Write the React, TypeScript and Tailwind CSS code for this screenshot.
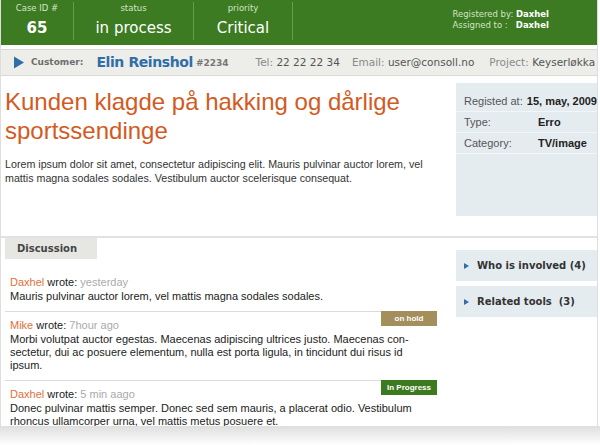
const headerFont = { fontFamily: '"DejaVu Sans", Verdana, sans-serif' };
const bodyFont = { fontFamily: '"Liberation Sans", Arial, sans-serif' };

function Triangle({ className }: { className: string }) {
  return (
    <svg viewBox="0 0 10 12" className={`shrink-0 ${className}`}>
      <path d="M0 0 L10 6 L0 12 Z" fill="currentColor" />
    </svg>
  );
}

const comments = [
  {
    name: 'Daxhel',
    when: 'yesterday',
    lines: ['Mauris pulvinar auctor lorem, vel mattis magna sodales sodales.'],
  },
  {
    name: 'Mike',
    when: '7hour ago',
    badge: { text: 'on hold', cls: 'bg-[#a38e5c]' },
    lines: [
      'Morbi volutpat auctor egestas. Maecenas adipiscing ultrices justo. Maecenas con-',
      'sectetur, dui ac posuere elementum, nulla est porta ligula, in tincidunt dui risus id',
      'ipsum.',
    ],
  },
  {
    name: 'Daxhel',
    when: '5 min aago',
    badge: { text: 'In Progress', cls: 'bg-[#3c7a20]' },
    lines: [
      'Donec pulvinar mattis semper. Donec sed sem mauris, a placerat odio. Vestibulum',
      'rhoncus ullamcorper urna, vel mattis metus posuere et.',
    ],
  },
];

export default function App() {
  return (
    <div className="w-[600px] h-[445px] bg-white overflow-hidden" style={bodyFont}>
      <div className="w-[598px] h-[426px] border-x border-[#dedede] overflow-hidden flex flex-col">
        {/* header */}
        <div className="h-[45px] bg-[#3d7b22] flex text-white shrink-0" style={headerFont}>
          <div className="w-[72px] flex flex-col items-center pt-[3px]">
            <span className="text-[8.5px] text-[#d3e3c8] leading-[11px]">Case ID #</span>
            <span className="mt-[2px] text-[15px] font-bold leading-[24px]">65</span>
          </div>
          <div className="w-px h-[38px] bg-[#6a9c50] mt-[2px]" />
          <div className="w-[119px] flex flex-col items-center pt-[3px]">
            <span className="text-[8.5px] text-[#d3e3c8] leading-[11px]">status</span>
            <span className="mt-[2px] text-[15px] leading-[24px]">in process</span>
          </div>
          <div className="w-px h-[38px] bg-[#6a9c50] mt-[2px]" />
          <div className="w-[98px] flex flex-col items-center pt-[3px]">
            <span className="text-[8.5px] text-[#d3e3c8] leading-[11px]">priority</span>
            <span className="mt-[2px] text-[15px] leading-[24px]">Critical</span>
          </div>
          <div className="w-px h-[38px] bg-[#6a9c50] mt-[2px]" />
          <div className="flex-1 flex justify-end pr-[48px] pt-[9px]">
            <div className="text-[8.5px] leading-[11px] text-[#d3e3c8]">
              <div>
                Registered by: <span className="font-bold text-white">Daxhel</span>
              </div>
              <div>
                Assigned to : &nbsp; <span className="font-bold text-white">Daxhel</span>
              </div>
            </div>
          </div>
        </div>

        {/* customer bar */}
        <div
          className="mt-[4px] h-[27px] bg-[#ededea] border-y border-[#d9d9d5] flex items-center whitespace-nowrap shrink-0 overflow-hidden"
          style={headerFont}
        >
          <Triangle className="w-[10px] h-[13px] ml-[13px] text-[#2f6ea6]" />
          <span className="shrink-0 ml-[7px] text-[9px] font-bold text-[#6d6d6d]">Customer:</span>
          <span className="shrink-0 ml-[13px] text-[14px] font-bold text-[#2f6ea6] tracking-[-0.4px]">Elin Reinshol</span>
          <span className="shrink-0 ml-[3px] text-[9px] font-bold text-[#777] mt-[3px]">#2234</span>
          <span className="shrink-0 ml-[27px] text-[10.5px] text-[#8a8a8a]">
            Tel: <span className="text-[#555]">22 22 22 34</span>
          </span>
          <span className="shrink-0 ml-[12px] text-[10.5px] text-[#8a8a8a]">
            Email: <span className="text-[#555]">user@consoll.no</span>
          </span>
          <span className="shrink-0 ml-[15px] text-[10.5px] text-[#8a8a8a]">
            Project: <span className="text-[#555]">Keyserløkka nord</span>
          </span>
        </div>

        {/* case summary */}
        <div className="flex h-[160px] shrink-0">
          <div className="flex-1 pl-[4px] pt-[11px]">
            <h1 className="text-[24px] leading-[29px] text-[#d35a22] whitespace-nowrap">
              Kunden klagde på hakking og dårlige
              <br />
              sportssendinge
            </h1>
            <p className="mt-[12px] text-[10.7px] leading-[14px] text-[#333] whitespace-nowrap">
              Lorem ipsum dolor sit amet, consectetur adipiscing elit. Mauris pulvinar auctor lorem, vel
              <br />
              mattis magna sodales sodales. Vestibulum auctor scelerisque consequat.
            </p>
          </div>
          <div className="w-[141px] mt-[7px] h-[133px] bg-[#e5ecf0] pt-[8px] overflow-hidden whitespace-nowrap text-[11px]">
            {[
              ['Registed at:', '15, may, 2009'],
              ['Type:', 'Erro'],
              ['Category:', 'TV/image'],
            ].map(([k, v]) => (
              <div key={k} className="flex h-[21px] items-center border-b border-[#f2f6f8] pl-[8px]">
                <span className="w-[74px] text-[#555]">{k}</span>
                <span className="font-bold text-[#222]">{v}</span>
              </div>
            ))}
          </div>
        </div>

        {/* discussion */}
        <div className="border-t-2 border-[#e2e2e2] flex flex-1 min-h-0">
          <div className="flex-1 pl-[4px] min-w-0">
            <div
              className="w-[92px] h-[21px] bg-[#e6e7e3] text-[10px] font-bold text-[#444] flex items-center pl-[12px]"
              style={headerFont}
            >
              Discussion
            </div>
            <div className="w-[432px] text-[11px] leading-[13px] whitespace-nowrap mt-[16px]">
              {comments.map((c, i) => (
                <div key={i}>
                  {i > 0 && (
                    <div className="relative border-t border-[#dcdcdc] mr-[56px]">
                      {c.badge && (
                        <span
                          className={`${c.badge.cls} absolute left-full -top-[1px] w-[56px] h-[15px] text-white text-[8px] font-bold flex items-center justify-center`}
                        >
                          {c.badge.text}
                        </span>
                      )}
                    </div>
                  )}
                  <div className={`pl-[5px] ${i > 0 ? 'pt-[6px]' : ''} pb-[8px]`}>
                    <div className="h-[15px] leading-[15px]">
                      <span className="text-[#e0703a]">{c.name}</span>{' '}
                      <span className="text-[#222]">wrote:</span>{' '}
                      <span className="text-[#aaa]">{c.when}</span>
                    </div>
                    {c.lines.map((l) => (
                      <div key={l} className="text-[#222]">
                        {l}
                      </div>
                    ))}
                  </div>
                </div>
              ))}
            </div>
          </div>
          <div className="w-[141px] pt-[12px] flex flex-col gap-[5px] whitespace-nowrap" style={headerFont}>
            <div className="h-[31px] bg-[#e5ecf0] flex items-center pl-[8px]">
              <Triangle className="w-[5px] h-[8px] text-[#2f6ea6]" />
              <span className="ml-[8px] text-[10px] font-bold text-[#333]">Who is involved (4)</span>
            </div>
            <div className="h-[31px] bg-[#e5ecf0] flex items-center pl-[8px]">
              <Triangle className="w-[5px] h-[8px] text-[#2f6ea6]" />
              <span className="ml-[8px] text-[10px] font-bold text-[#333]">Related tools &nbsp;(3)</span>
            </div>
          </div>
        </div>
      </div>
      <div className="h-[19px] bg-gradient-to-b from-[#dedede] to-white" />
    </div>
  );
}
